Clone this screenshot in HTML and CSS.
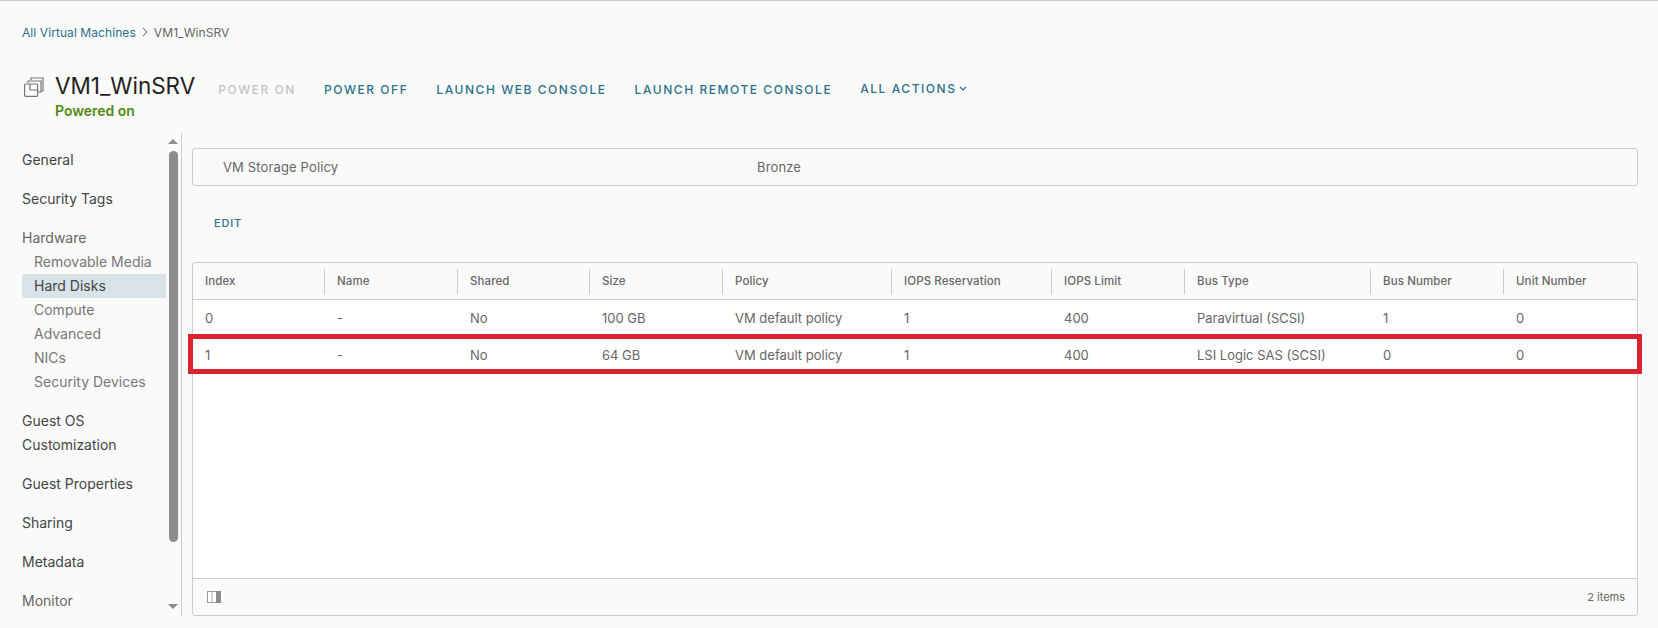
FILE: index.html
```html
<!DOCTYPE html>
<html lang="en">
<head>
    <meta charset="UTF-8">
    <title>VM1_WinSRV</title>
    <link rel="stylesheet" href="styles.css">
</head>
<body>
    <div class="page">
        <div class="breadcrumb">
            <a class="crumb-link">All Virtual Machines</a>
            <svg class="crumb-sep" width="8" height="10" viewBox="0 0 8 10"><path d="M2 1l4 4-4 4" fill="none" stroke="#666" stroke-width="1"/></svg>
            <span>VM1_WinSRV</span>
        </div>

        <div class="header">
            <svg class="vm-icon" width="20" height="20" viewBox="0 0 20 20" fill="none" stroke="#777" stroke-width="1.2">
                <path d="M7 3V1h12v13h-2"/>
                <path d="M4 6V4h13v11h-3"/>
                <rect x="0.6" y="7" width="13" height="12.4" rx="1"/>
                <path d="M6 7v6h8"/>
            </svg>
            <div class="title-block">
                <h1>VM1_WinSRV</h1>
                <div class="status">Powered on</div>
            </div>
            <div class="actions">
                <a class="action disabled">POWER ON</a>
                <a class="action">POWER OFF</a>
                <a class="action">LAUNCH WEB CONSOLE</a>
                <a class="action">LAUNCH REMOTE CONSOLE</a>
                <a class="action all-actions">ALL ACTIONS
                    <svg width="8" height="6" viewBox="0 0 8 6"><path d="M1 1l3 3 3-3" fill="none" stroke="#2b7189" stroke-width="1.2"/></svg>
                </a>
            </div>
        </div>

        <div class="main">
            <div class="sidebar">
                <nav class="nav">
                    <div class="nav-item">General</div>
                    <div class="nav-item">Security Tags</div>
                    <div class="nav-group">
                        <div class="nav-head">Hardware</div>
                        <div class="nav-sub">Removable Media</div>
                        <div class="nav-sub active">Hard Disks</div>
                        <div class="nav-sub">Compute</div>
                        <div class="nav-sub">Advanced</div>
                        <div class="nav-sub">NICs</div>
                        <div class="nav-sub">Security Devices</div>
                    </div>
                    <div class="nav-item">Guest OS<br>Customization</div>
                    <div class="nav-item">Guest Properties</div>
                    <div class="nav-item">Sharing</div>
                    <div class="nav-item">Metadata</div>
                    <div class="nav-item muted">Monitor</div>
                </nav>
                <div class="scrollbar">
                    <span class="arrow up"></span>
                    <span class="thumb"></span>
                    <span class="arrow down"></span>
                </div>
            </div>

            <div class="content">
                <div class="policy-card">
                    <div class="policy-label">VM Storage Policy</div>
                    <div class="policy-value">Bronze</div>
                </div>

                <a class="edit-btn">EDIT</a>

                <div class="grid">
                    <div class="row head">
                        <div>Index</div>
                        <div>Name</div>
                        <div>Shared</div>
                        <div>Size</div>
                        <div>Policy</div>
                        <div>IOPS Reservation</div>
                        <div>IOPS Limit</div>
                        <div>Bus Type</div>
                        <div>Bus Number</div>
                        <div>Unit Number</div>
                    </div>
                    <div class="grid-body">
                        <div class="row">
                            <div>0</div>
                            <div>-</div>
                            <div>No</div>
                            <div>100 GB</div>
                            <div>VM default policy</div>
                            <div>1</div>
                            <div>400</div>
                            <div>Paravirtual (SCSI)</div>
                            <div>1</div>
                            <div>0</div>
                        </div>
                        <div class="row">
                            <div>1</div>
                            <div>-</div>
                            <div>No</div>
                            <div>64 GB</div>
                            <div>VM default policy</div>
                            <div>1</div>
                            <div>400</div>
                            <div>LSI Logic SAS (SCSI)</div>
                            <div>0</div>
                            <div>0</div>
                        </div>
                    </div>
                    <div class="grid-footer">
                        <svg width="14" height="12" viewBox="0 0 14 12"><rect x="0.5" y="0.5" width="13" height="11" fill="#fff" stroke="#999"/><path d="M5 0v12" stroke="#aaa"/><rect x="9" y="0" width="5" height="12" fill="#8c8c8c"/></svg>
                        <span class="item-count">2 items</span>
                    </div>
                    <div class="highlight"></div>
                </div>
            </div>
        </div>
    </div>
</body>
</html>
```

FILE: styles.css
```css
* {
    margin: 0;
    padding: 0;
    box-sizing: border-box;
}

html, body {
    height: 100%;
    overflow: hidden;
}

body {
    font-family: "Inter", "Open Sans", sans-serif;
    background-color: #fafafa;
    color: #666;
    border-top: 1px solid #ccc;
}

.page {
    height: 627px;
    display: flex;
    flex-direction: column;
}

.breadcrumb {
    display: flex;
    align-items: center;
    gap: 5px;
    height: 20px;
    margin: 21px 0 0 22px;
    font-size: 12px;
    letter-spacing: 0.08px;
    color: #666;
}

.crumb-link {
    color: #2b7189;
}

.header {
    display: flex;
    height: 50px;
    margin: 28px 0 0 22px;
}

.vm-icon {
    margin: 7px 11px 0 2px;
}

.title-block h1 {
    font-size: 22.5px;
    font-weight: 400;
    line-height: 30px;
    color: #222;
    margin-top: 1px;
}

.status {
    font-size: 14px;
    font-weight: 600;
    line-height: 18px;
    margin-top: 1px;
    color: #4f8a10;
}

.actions {
    display: flex;
    gap: 28px;
    margin: 10px 0 0 23px;
}

.action {
    font-size: 12px;
    font-weight: 500;
    letter-spacing: 1.55px;
    line-height: 20px;
    color: #2b7189;
}

.action.disabled {
    color: #c4c4c4;
}

.all-actions {
    margin-top: -1px;
}

.all-actions svg {
    margin-left: -2px;
    vertical-align: 1px;
}

.main {
    display: flex;
    height: 483px;
    margin-top: 13px;
}

.sidebar {
    width: 182px;
    flex-shrink: 0;
    display: flex;
    border-right: 1px solid #ccc;
    padding-left: 22px;
}

.nav {
    width: 146px;
    padding-top: 15px;
    font-size: 14px;
    line-height: 24px;
    color: #444;
}

.nav-item {
    margin-bottom: 15px;
}

.nav-item.muted,
.nav-head {
    color: #666;
}

.nav-group {
    margin-bottom: 15px;
}

.nav-sub {
    width: 144px;
    padding-left: 12px;
    color: #777;
}

.nav-sub.active {
    background: #d8e3e9;
    border-radius: 3px 0 0 3px;
    color: #444;
}

.scrollbar {
    width: 10px;
    display: flex;
    flex-direction: column;
    align-items: center;
}

.thumb {
    width: 9px;
    height: 391px;
    margin: 7px 0 62px;
    background: #8c8c8c;
    border-radius: 5px;
}

.arrow {
    width: 0;
    height: 0;
    border-left: 5px solid transparent;
    border-right: 5px solid transparent;
}

.arrow.up {
    border-bottom: 5px solid #8c8c8c;
    margin-top: 6px;
}

.arrow.down {
    border-top: 5px solid #8c8c8c;
}

.content {
    flex: 1;
    padding: 15px 20px 0 10px;
    display: flex;
    flex-direction: column;
}

.policy-card {
    display: flex;
    align-items: center;
    height: 38px;
    border: 1px solid #ccc;
    border-radius: 3px;
    font-size: 13px;
    letter-spacing: 0.14px;
}

.policy-label {
    width: 564px;
    padding-left: 30px;
}

.edit-btn {
    display: block;
    margin: 29px 0 0 22px;
    font-size: 11px;
    font-weight: 500;
    letter-spacing: 0.8px;
    line-height: 16px;
    color: #2b7189;
}

.grid {
    position: relative;
    margin-top: 31px;
    height: 354px;
    border: 1px solid #ccc;
    border-radius: 3px;
    display: flex;
    flex-direction: column;
}

.row {
    display: grid;
    grid-template-columns: 132px 133px 132px 133px 169px 160px 133px 186px 133px 1fr;
    height: 37px;
    align-items: center;
    font-size: 13px;
    padding-bottom: 2px;
}

.row > div {
    padding-left: 12px;
}

.head {
    height: 37px;
    padding-bottom: 0;
    border-bottom: 1px solid #ccc;
    font-size: 11.5px;
    font-weight: 500;
    letter-spacing: 0.1px;
}

.head > div {
    height: 25px;
    line-height: 25px;
    border-right: 1px solid #ccc;
}

.head > div:last-child {
    border-right: none;
}

.grid-body {
    flex: 1;
    background: #fff;
}

.grid-footer {
    display: flex;
    align-items: center;
    justify-content: space-between;
    height: 37px;
    border-top: 1px solid #ccc;
    padding: 0 12px 0 14px;
}

.item-count {
    font-size: 11px;
}

/* red box drawn over the second row */
.highlight {
    position: absolute;
    left: -5px;
    right: -5px;
    top: 71px;
    height: 40px;
    border: 5px solid #d9232e;
}
```
